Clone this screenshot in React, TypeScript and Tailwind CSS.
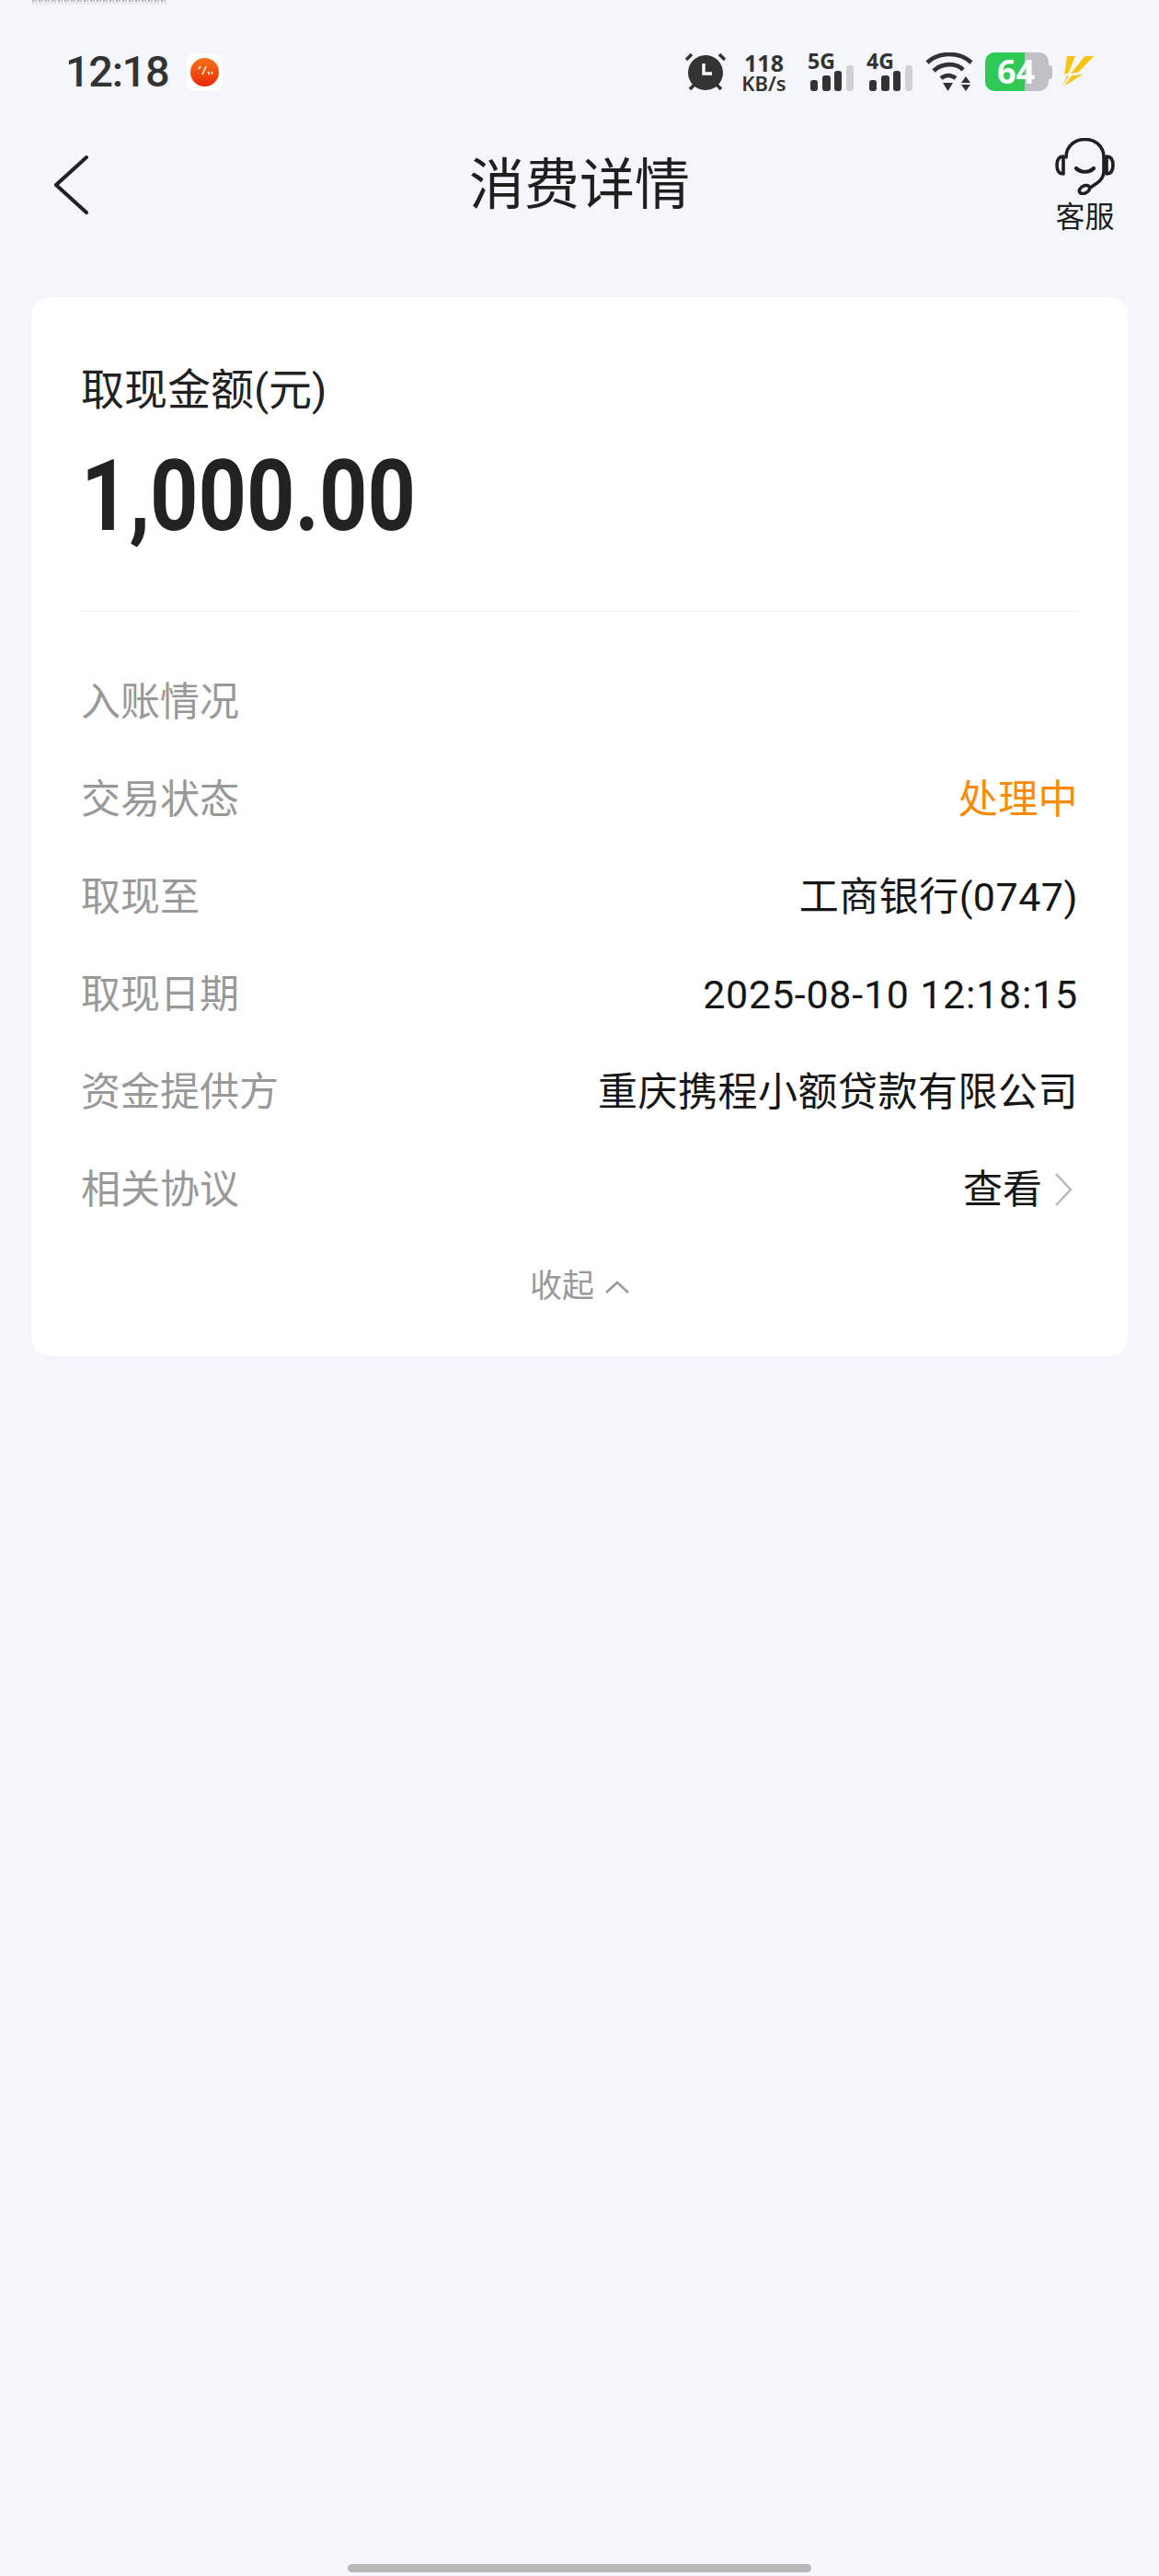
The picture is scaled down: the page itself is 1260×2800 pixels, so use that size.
const cjk = "font-['Roboto','Noto_Sans_CJK_SC',sans-serif]";

const rows = [
  { label: "入账情况", value: "", cls: "" },
  { label: "交易状态", value: "处理中", cls: "text-[#fb8a07] tracking-[0.4px]" },
  { label: "取现至", value: "工商银行(0747)", cls: "text-[#161616] tracking-[0.5px]" },
  { label: "取现日期", value: "2025-08-10 12:18:15", cls: "text-[#161616] tracking-[0.75px]" },
  { label: "资金提供方", value: "重庆携程小额贷款有限公司", cls: "text-[#161616] tracking-[0.5px]" },
];

const Alarm = () => (
  <svg width="44" height="42" viewBox="0 0 44 42" fill="none">
    <circle cx="22" cy="22" r="19" fill="#333" />
    <path d="M20 12v11h9" stroke="#fff" strokeWidth="3.4" fill="none" />
    <path d="M1 8 7 2M43 8 37 2M5 40l5-5M39 40l-5-5" stroke="#333" strokeWidth="3.6" />
  </svg>
);

const Signal = ({ label }: { label: string }) => (
  <div className="relative w-[50px] h-[42px]">
    <span className="absolute left-0 top-[-4px] text-[23px] leading-[26px] font-bold text-[#333] font-['Noto_Sans',sans-serif]">{label}</span>
    <svg className="absolute left-0 top-0" width="50" height="42" viewBox="0 0 50 42">
      <rect x="3" y="30" width="8" height="12" rx="3" fill="#333" />
      <rect x="16" y="25" width="9" height="17" rx="3" fill="#333" />
      <rect x="29" y="20" width="8" height="22" rx="3" fill="#333" />
      <rect x="42" y="14" width="8" height="28" rx="3" fill="#d0d1d5" />
    </svg>
  </div>
);

const Wifi = () => (
  <svg width="52" height="42" viewBox="0 0 52 42" fill="none">
    <path d="M2 11C15 -1 37 -1 50 11" stroke="#333" strokeWidth="4.6" />
    <path d="M9 20C18 11 34 11 41 19" stroke="#333" strokeWidth="4.6" />
    <path d="M17 28c5-4 11-4 16 0" stroke="#333" strokeWidth="4.6" />
    <path d="M19 33h11l-5.500 9z" fill="#333" />
    <path d="M39 33h10l-5-7zM39 35h10l-5 7z" fill="#333" />
  </svg>
);

const Bolt = () => (
  <svg width="35" height="34" viewBox="0 0 35 34" fill="#f6c414">
    <path d="M5 0H14L6.700 18.300 2.300 19.700Z" />
    <path d="M24.300 0H34.300L17.700 17.300 9 19Z" />
    <path d="M5 21.300H7L0 33Z" />
    <path d="M22.300 19.700 2.300 32.300 10 21.300Z" />
  </svg>
);

const Headset = () => (
  <svg width="65" height="62" viewBox="0 0 65 62" fill="none" stroke="#1f1f1f" strokeWidth="3.600" strokeLinecap="round" strokeLinejoin="round">
    <path d="M12 21C12 -5 53 -5 53 21V36C53 45 46 49 38 54" />
    <path d="M9 20C4 20 2 24 2 29.500S4 39 9 39Z" />
    <path d="M56 20C61 20 63 24 63 29.500S61 39 56 39Z" />
    <path d="M23 33C28 38 37 38 42 33" strokeWidth="4.200" />
    <ellipse cx="32" cy="56" rx="6" ry="4" transform="rotate(-28 32 56)" />
  </svg>
);

export default function App() {
  return (
    <div className={`w-[1260px] h-[2800px] flex flex-col bg-[#f4f6fb] ${cjk}`}>
      {/* cropped line of the screen above */}
      <div className="h-[6px] pl-[35px] overflow-hidden">
        <div className="w-[146px] h-[2px] bg-[repeating-linear-gradient(90deg,#b4b4b6_0_2px,#e6e8ec_2px_3px,#c6c6c8_3px_5px,#eef0f4_5px_7px)]" />
        <div className="w-[146px] h-[3px] bg-[repeating-linear-gradient(90deg,#e4e6ea_0_2px,#f1f3f7_2px_4px)]" />
      </div>

      <div className="mt-[51px] h-[42px] pl-[71px] flex items-center">
        <span className="text-[47px] leading-[42px] font-medium tracking-[-1.4px] text-[#333]">12:18</span>
        <div className="ml-[20px] w-[39px] h-[41px] rounded-[9px] bg-white flex items-center justify-center">
          <svg width="31" height="31" viewBox="0 0 31 31">
            <defs>
              <linearGradient id="dot" x1="0" y1="0" x2="0" y2="1">
                <stop offset="0" stopColor="#f97316" />
                <stop offset="1" stopColor="#e92a06" />
              </linearGradient>
            </defs>
            <circle cx="15.500" cy="15.500" r="15.500" fill="url(#dot)" />
            <path d="M9 12l2-3M13 18l4-9M19 15l2 3M23 15l1 2" stroke="#fde6d5" strokeWidth="1.800" />
          </svg>
        </div>
        <div className="ml-auto flex items-center">
          <Alarm />
          <div className="ml-[16px] w-[51px] flex flex-col items-center font-['Noto_Sans',sans-serif] text-[#333] font-semibold">
            <span className="text-[25px] leading-[24px] font-bold">118</span>
            <span className="text-[22px] leading-[20px]">KB/s</span>
          </div>
          <div className="ml-[22px]"><Signal label="5G" /></div>
          <div className="ml-[14px]"><Signal label="4G" /></div>
          <div className="ml-[14px]"><Wifi /></div>
          <div className="ml-[13px] relative flex items-center">
            <div className="w-[43px] h-[42px] rounded-l-[10px] bg-[#2fc955]" />
            <div className="w-[26px] h-[42px] rounded-r-[10px] bg-[#c0c1c6]" />
            <div className="w-[4px] h-[15px] rounded-r-[3px] bg-[#c0c1c6]" />
            <span className="absolute left-[13px] top-0 text-[36px] leading-[42px] font-bold text-white font-['Noto_Sans',sans-serif]">64</span>
          </div>
          <div className="ml-[11px] mr-[70px]"><Bolt /></div>
        </div>
      </div>

      <div className="h-[204px] px-[48px] grid grid-cols-[1fr_auto_1fr] items-center">
        <svg className="ml-[11px]" width="38" height="64" viewBox="0 0 38 64" fill="none" stroke="#222" strokeWidth="4" strokeLinecap="round">
          <path d="M35 2 2 32l33 30" />
        </svg>
        <h1 className="mt-[2px] text-[60px] leading-[70px] font-normal text-[#1f1f1f]">消费详情</h1>
        <div className="justify-self-end flex flex-col items-center">
          <Headset />
          <span className="mt-[7px] text-[32px] leading-[34px] text-[#1f1f1f]">客服</span>
        </div>
      </div>

      <section className="mt-[20px] mx-[34px] rounded-[20px] bg-white px-[54px] pb-[22px]">
        <div className="pt-[71px] text-[47px] leading-[60px] text-[#222]">取现金额(元)</div>
        <div className="mt-[31px] h-[109px] text-[107px] leading-[110px] font-bold text-[#222] origin-left scale-x-[0.855]">1,000.00</div>
        <div className="mt-[70px] h-px bg-[#f2f2f2]" />
        <div className="mt-[45px]">
          {rows.map((row) => (
            <div key={row.label} className="h-[106px] flex items-center justify-between text-[43px] leading-[60px]">
              <span className="text-[#999]">{row.label}</span>
              <span className={row.cls}>{row.value}</span>
            </div>
          ))}
          <div className="h-[106px] flex items-center justify-between text-[43px] leading-[60px]">
            <span className="text-[#999]">相关协议</span>
            <span className="flex items-center text-[#161616]">
              查看
              <svg className="ml-[13px] mr-[6px]" width="20" height="38" viewBox="0 0 20 38" fill="none" stroke="#b9b9b9" strokeWidth="2.500">
                <path d="M2 2l16 17L2 36" />
              </svg>
            </span>
          </div>
        </div>
        <div className="h-[106px] flex items-center justify-center text-[35px] leading-[50px] text-[#999]">
          收起
          <svg className="ml-[12px]" width="26" height="14" viewBox="0 0 26 14" fill="none" stroke="#999" strokeWidth="2.500">
            <path d="M1 13 13 2l12 11" />
          </svg>
        </div>
      </section>

      <div className="mt-auto mb-[4px] mx-auto w-[504px] h-[9px] rounded-full bg-[#b8b8ba]" />
    </div>
  );
}
